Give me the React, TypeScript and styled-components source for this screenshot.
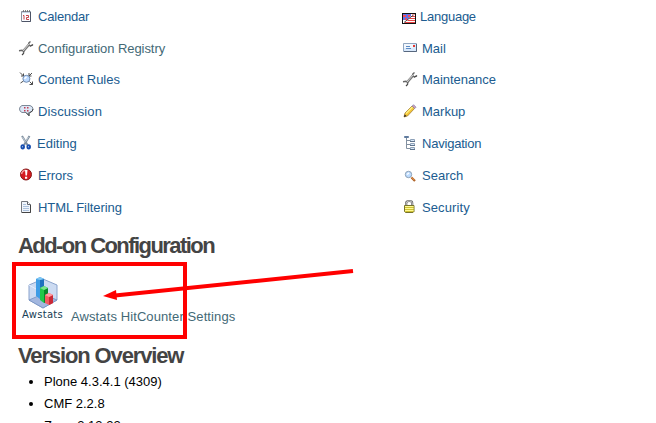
import React from "react";
import styled, { createGlobalStyle } from "styled-components";

const GlobalStyle = createGlobalStyle`
  html, body { margin: 0; padding: 0; background: #fff; overflow: hidden; }
  body { font-family: "Liberation Sans", Arial, sans-serif; font-size: 13px; color: #000; }
`;

const Page = styled.main`
  position: relative;
  box-sizing: border-box;
  width: 656px;
  height: 423px;
  padding-left: 18px;
  overflow: hidden;
`;

const Columns = styled.div`
  display: grid;
  grid-template-columns: 384px 1fr;
  height: 233px;
`;

const Column = styled.ul`
  list-style: none;
  margin: 0;
  padding: 0;
`;

const Row = styled.li`
  display: flex;
  align-items: flex-start;
  box-sizing: border-box;
  height: 32px;
  padding-top: 8px;

  &:nth-child(2) {
    height: 31px;
  }
`;

const Link = styled.a<{ $visited?: boolean; $gap?: number; $tracking?: number }>`
  margin-top: 1px;
  margin-left: ${(p) => p.$gap ?? 4}px;
  line-height: 16px;
  letter-spacing: ${(p) => p.$tracking ?? 0}px;
  white-space: nowrap;
  text-decoration: none;
  color: ${(p) => (p.$visited ? "#436976" : "#205c90")};
`;

const Icon = styled.svg`
  display: block;
  flex: none;
  width: 16px;
  height: 16px;
`;

const Heading = styled.h2<{ $tracking: number }>`
  margin: 0;
  height: 26px;
  line-height: 26px;
  font-size: 22px;
  font-weight: bold;
  letter-spacing: ${(p) => p.$tracking}px;
  color: #444;
  white-space: nowrap;
`;

const AddOn = styled.div`
  display: flex;
  align-items: flex-start;
  height: 84px;
`;

const Product = styled.div`
  display: flex;
  flex-direction: column;
  align-items: center;
  width: 49px;
  padding-top: 18px;
`;

const Cube = styled.svg`
  display: block;
  width: 30px;
  height: 32px;
`;

const ProductName = styled.span`
  font: 10px/12px "DejaVu Sans", sans-serif;
  color: #174055;
  letter-spacing: 0.3px;
`;

const AddOnLink = styled(Link)`
  margin-top: 50px;
`;

const Versions = styled.ul`
  margin: 2px 0 0;
  padding-left: 26px;
  line-height: 22px;
`;

const Highlight = styled.div`
  position: absolute;
  box-sizing: border-box;
  left: 12px;
  top: 262px;
  width: 175px;
  height: 77px;
  border: 4px solid #f00;
`;

const Arrow = styled.svg`
  position: absolute;
  left: 100px;
  top: 265px;
  width: 256px;
  height: 38px;
`;

const Calendar = () => (
  <Icon viewBox="0 0 16 16">
    <path d="M3.5 3.5h9v10h-9z" fill="#fafcff" stroke="#8b909d" />
    <path d="M12.5 4v9.5H4" fill="none" stroke="#4d5466" />
    <path d="M4 4h8v1H4z" fill="#c6d3e5" />
    <path d="M5.5 2v2m2-2v2m2-2v2m2-2v2" stroke="#686868" strokeWidth=".8" />
    <path d="M5 7.5h1v4M8 7.5h2.5v2h-2v2H11" fill="none" stroke="#c8454b" />
  </Icon>
);

const Wrench = () => (
  <Icon viewBox="0 0 16 16">
    <path d="M5 11.5l6-7" stroke="#777" strokeWidth="2.6" />
    <path d="M12.5 1.5L10.8 3v2l1.5 1 2.7-1.3M1 10.8l3-.5 1.7 1.2-.2 2L4 15" fill="none" stroke="#666" strokeWidth="1.4" />
    <path d="M5 11l6-7" stroke="#d4d4d4" strokeWidth="1" />
    <path d="M12.3 6.3l2.8-1.5M4 15l1.8-1.7" stroke="#333" strokeWidth=".7" />
  </Icon>
);

const Rules = () => (
  <Icon viewBox="0 0 16 16">
    <path d="M2 1.5l3.5 3.5M5.5 2.5V5H3M14 2l-3 3m0-3v3h2.5M2.5 12l3-2M11.5 10.5l3 3m0-3v3h-3" fill="none" stroke="#4d4d4d" />
    <circle cx="8.4" cy="7.8" r="3.5" fill="#bddaff" stroke="#6782a8" strokeWidth=".9" />
    <path d="M6.5 7.7l2-2" stroke="#fff" strokeWidth="1.6" />
  </Icon>
);

const Discussion = () => (
  <Icon viewBox="0 0 16 16">
    <path d="M4 2.5h8q3 1 3 3.5t-3 3.5h-1v3.2L8 9.5H4Q1.5 8.500 1.5 6T4 2.500z" fill="#dce7f6" stroke="#7d8998" />
    <path d="M12 9.5q3-1 3-3.500M11 9.500v3.200L8 9.500" fill="none" stroke="#444" />
    <path d="M6 4h1.500v1.500H6zm3 0h1.500v1.500H9zM6 7h1.500v1.500H6zm3 0h1.500v1.500H9z" fill="#c23d52" />
  </Icon>
);

const Scissors = () => (
  <Icon viewBox="0 0 16 16">
    <path d="M4 1l5.500 9M11.500 1L6 10" stroke="#8090a0" strokeWidth="2" />
    <path d="M4.500 2l3 5m3-5L8 6" stroke="#dce4eb" strokeWidth=".7" />
    <ellipse cx="4.700" cy="11.800" rx="1.300" ry="1.700" fill="#fff" stroke="#174eaf" strokeWidth="1.900" />
    <ellipse cx="10.700" cy="11.800" rx="1.300" ry="1.700" fill="#fff" stroke="#174eaf" strokeWidth="1.900" />
  </Icon>
);

const ErrorIcon = () => (
  <Icon viewBox="0 0 16 16">
    <circle cx="8" cy="7.500" r="5.500" fill="#d51b20" stroke="#851b1b" />
    <path d="M3.600 7q.4-3.500 4-3.800" fill="none" stroke="#f29a9a" strokeWidth="1.500" />
    <path d="M7 3h2.500L9 8.500H7.500zM7 9.700h2.200v2H7z" fill="#fff" />
  </Icon>
);

const Document = () => (
  <Icon viewBox="0 0 16 16">
    <path d="M3.500 2.500h6l3 3v8h-9z" fill="#f0f5fc" stroke="#74787f" />
    <path d="M9.500 2.500v3h3" fill="#fff" stroke="#61656d" />
    <path d="M5 5.500h3m-3 2h6m-6 2h6m-6 2h6" stroke="#abc1dc" />
    <path d="M12.500 6v7.500H4" fill="none" stroke="#444" />
  </Icon>
);

const Flag = () => (
  <Icon viewBox="0 0 16 16">
    <path d="M0 5h14v11H0z" fill="#111" />
    <path d="M1 6h12v9H1z" fill="#fff" />
    <path d="M1 6h8v2L5 12H1z" fill="#6273e9" />
    <path d="M1 7h3v2H1zm5 0h2v2H6zM3 10h2v2H3z" fill="#f24b5e" />
    <path d="M9.500 8.500H13M7.500 10.500H13M5.500 12.500H13M3 14.500h10" stroke="#e74444" />
    <path d="M2 14.500L12 6.500" stroke="#222" strokeWidth=".8" />
    <path d="M10 6.500h3" stroke="#f5a1a1" />
  </Icon>
);

const Mail = () => (
  <Icon viewBox="0 0 16 16">
    <path d="M1.500 3.500h13v8h-13z" fill="#d9e9fc" stroke="#91a6c0" />
    <path d="M2 4h9v4H2z" fill="#f2f7fd" />
    <path d="M14.500 4v7.500H2" fill="none" stroke="#57677e" />
    <path d="M4 6.500h4M4 8.500h5" stroke="#5c8bc5" />
    <path d="M11 5h2v2h-2z" fill="#e6392e" />
  </Icon>
);

const Pencil = () => (
  <Icon viewBox="0 0 16 16">
    <path d="M2 14l1-4L10 3l2.500 2.500L5.500 13z" fill="#f4c638" stroke="#9a712c" strokeWidth=".7" />
    <path d="M4 10.500l6.500-6.500" stroke="#fff386" strokeWidth="1.200" />
    <path d="M10.200 3l1.300-1.300 2.500 2.500-1.300 1.300z" fill="#dda0b6" stroke="#747baa" strokeWidth=".7" />
    <path d="M2 14l.7-2.500L4.500 13z" fill="#222" />
  </Icon>
);

const Tree = () => (
  <Icon viewBox="0 0 16 16">
    <path d="M4.500 2v11.500h4M4.500 5.500h4m-4 4h4" fill="none" stroke="#8290a0" />
    <path d="M2.500 1.500h4v1h-4z" fill="#a9c3e2" stroke="#607b9e" />
    <path d="M8.500 4.500h4v2h-4zm0 4h4v2h-4zm0 4h4v2h-4z" fill="#d9e7f7" stroke="#8da1b8" />
    <path d="M8 6.500h5m-5 4h5m-5 4h5" stroke="#5e738c" />
  </Icon>
);

const Search = () => (
  <Icon viewBox="0 0 16 16">
    <path d="M9.500 10.500l3.500 3.500" stroke="#ac6026" strokeWidth="2.200" />
    <path d="M9.500 10.200l3 3" stroke="#ed9b51" />
    <circle cx="6.500" cy="7.500" r="3.200" fill="#bddcff" stroke="#8da1b5" />
    <path d="M5 7.500L7 6" stroke="#fff" strokeWidth="1.400" />
  </Icon>
);

const Lock = () => (
  <Icon viewBox="0 0 16 16">
    <path d="M4.200 7V4q0-2 3-2t3 2v3" fill="none" stroke="#666" strokeWidth="2.200" />
    <path d="M4.200 7V4q0-2 3-2t3 2v3" fill="none" stroke="#ddd" strokeWidth=".8" />
    <path d="M2.500 6.500h9.500v6l-1 1H3.500l-1-1z" fill="#e3d844" stroke="#77732c" />
    <path d="M3 7.500h8.500M3 9.500h8.500M3 11.500h8.500" stroke="#fffa94" />
    <path d="M3 8.500h8.500M3 10.500h8.500M3.500 12.500h7.500" stroke="#c9bb2e" strokeWidth=".8" />
  </Icon>
);

type Entry = { label: string; icon: React.FC; visited?: boolean; gap?: number; tracking?: number };

const left: Entry[] = [
  { label: "Calendar", icon: Calendar, tracking: -0.2 },
  { label: "Configuration Registry", icon: Wrench, visited: true, tracking: -0.07 },
  { label: "Content Rules", icon: Rules, tracking: -0.04 },
  { label: "Discussion", icon: Discussion, tracking: 0.12 },
  { label: "Editing", icon: Scissors, gap: 3 },
  { label: "Errors", icon: ErrorIcon, tracking: -0.1 },
  { label: "HTML Filtering", icon: Document, tracking: -0.06 },
];

const right: Entry[] = [
  { label: "Language", icon: Flag, gap: 2, tracking: -0.25 },
  { label: "Mail", icon: Mail },
  { label: "Maintenance", icon: Wrench, tracking: -0.05 },
  { label: "Markup", icon: Pencil },
  { label: "Navigation", icon: Tree, tracking: -0.22 },
  { label: "Search", icon: Search },
  { label: "Security", icon: Lock, tracking: 0.1 },
];

const Entries = ({ items }: { items: Entry[] }) => (
  <Column>
    {items.map(({ label, icon: Glyph, visited, gap, tracking }) => (
      <Row key={label}>
        <Glyph />
        <Link $visited={visited} $gap={gap} $tracking={tracking}>{label}</Link>
      </Row>
    ))}
  </Column>
);

export default function App() {
  return (
    <>
      <GlobalStyle />
      <Page>
        <Columns>
          <Entries items={left} />
          <Entries items={right} />
        </Columns>
        <Heading $tracking={-1.56}>Add-on Configuration</Heading>
        <AddOn>
          <Product>
            <Cube viewBox="0 0 30 32">
              <path d="M1 8L15 2l14 6v15l-14 8L1 23z" fill="#ccdbf2" stroke="#8aa3cd" />
              <path d="M1 23l14-6 14 6-14 8z" fill="#a3b7df" stroke="#7590c0" strokeWidth=".8" />
              <path d="M15 2v15M1 8l7 4" fill="none" stroke="#e5efff" />
              <path d="M8 2l4-2 4 2v18l-4 2-4-3z" fill="#3e9ce5" />
              <path d="M12 3l4-1v18l-4 2z" fill="#1d71bd" />
              <path d="M8 2l4-2 4 2-4 1z" fill="#82c8f4" />
              <path d="M12 11l4-2 4 2v13l-4 2-4-3z" fill="#21c748" />
              <path d="M16 13l4-2v13l-4 2z" fill="#078829" />
              <path d="M12 11l4-2 4 2-4 2z" fill="#7ae48b" />
              <path d="M17 18l4-2 4 2v8l-4 2-4-2z" fill="#f35a61" />
              <path d="M21 20l4-2v8l-4 2z" fill="#ca2936" />
              <path d="M17 18l4-2 4 2-4 2z" fill="#ff9ba0" />
            </Cube>
            <ProductName>Awstats</ProductName>
          </Product>
          <AddOnLink $visited $tracking={0.1}>Awstats HitCounter Settings</AddOnLink>
        </AddOn>
        <Heading $tracking={-1.13}>Version Overview</Heading>
        <Versions>
          <li>Plone 4.3.4.1 (4309)</li>
          <li>CMF 2.2.8</li>
          <li>Zope 2.13.22</li>
        </Versions>
        <Highlight />
        <Arrow viewBox="0 0 256 38">
          <path d="M253 6L15 30.500" stroke="#f00" strokeWidth="4" />
          <path d="M3 31l13-6 1 10z" fill="#f00" />
        </Arrow>
      </Page>
    </>
  );
}
